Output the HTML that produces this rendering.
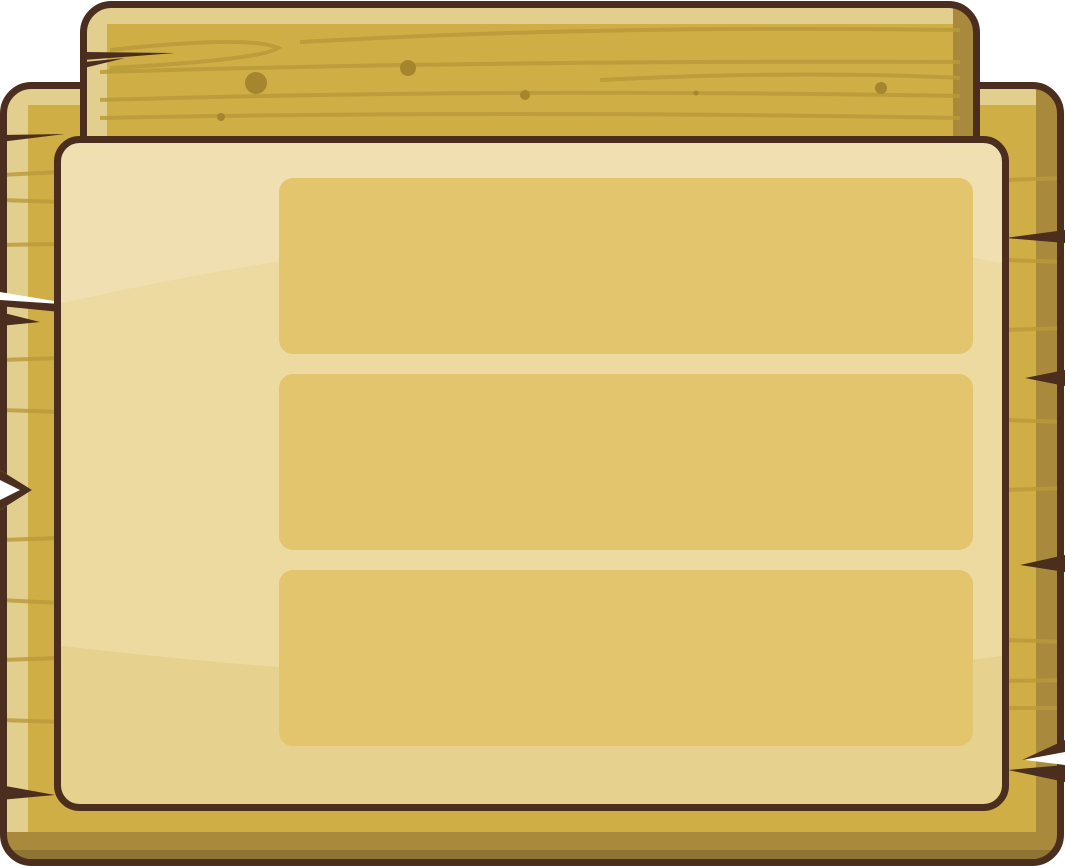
<!DOCTYPE html>
<html><head><style>html,body{margin:0;padding:0;background:#fff;}svg{display:block}</style></head>
<body>
<svg width="1065" height="866" viewBox="0 0 1065 866" xmlns="http://www.w3.org/2000/svg">
<defs>
<clipPath id="cb"><rect x="5" y="87" width="1054" height="774" rx="26"/></clipPath>
<clipPath id="ct"><rect x="85" y="6" width="890" height="150" rx="26"/></clipPath>
<clipPath id="cp"><rect x="60" y="142" width="943" height="663" rx="20"/></clipPath>
</defs>
<rect x="3.5" y="85.5" width="1057" height="777" rx="28" fill="#cfae45"/>
<g clip-path="url(#cb)">
<rect x="0" y="80" width="28" height="790" fill="#e2cf8e"/>
<rect x="0" y="80" width="1065" height="25" fill="#e2cf8e"/>
<rect x="1036" y="80" width="30" height="790" fill="#a98a3c"/>
<rect x="0" y="832" width="1065" height="40" fill="#a98a3c"/>
<rect x="0" y="850" width="1065" height="20" fill="#8f7533"/>
<g stroke="#b99a3a" stroke-width="4" opacity="0.8">
<line x1="0" y1="175" x2="60" y2="172"/><line x1="0" y1="200" x2="60" y2="202"/>
<line x1="0" y1="245" x2="60" y2="244"/><line x1="0" y1="360" x2="60" y2="358"/>
<line x1="0" y1="410" x2="60" y2="412"/><line x1="0" y1="540" x2="60" y2="538"/>
<line x1="0" y1="600" x2="60" y2="603"/><line x1="0" y1="660" x2="60" y2="658"/>
<line x1="0" y1="720" x2="60" y2="722"/>
<line x1="1005" y1="180" x2="1065" y2="178"/><line x1="1005" y1="260" x2="1065" y2="262"/>
<line x1="1005" y1="330" x2="1065" y2="328"/><line x1="1005" y1="420" x2="1065" y2="422"/>
<line x1="1005" y1="490" x2="1065" y2="488"/><line x1="1005" y1="640" x2="1065" y2="642"/>
<line x1="1005" y1="681" x2="1065" y2="680"/><line x1="1005" y1="708" x2="1065" y2="708"/>
</g>
</g>
<rect x="3.5" y="85.5" width="1057" height="777" rx="28" fill="none" stroke="#4b2e1e" stroke-width="7"/>
<polygon points="0,292 60,302 60,308 0,300" fill="#fff"/>
<polygon points="0,300 60,304 60,312 0,306" fill="#4b2e1e"/>
<polygon points="0,312 40,322 0,326" fill="#4b2e1e"/>
<polygon points="0,470 32,490 0,510" fill="#fff"/>
<polygon points="0,470 32,490 0,510 0,500 20,490 0,480" fill="#4b2e1e"/>
<polygon points="0,135 65,134 0,142" fill="#4b2e1e"/>
<polygon points="0,785 55,795 0,800" fill="#4b2e1e"/>
<polygon points="1065,230 1005,238 1065,243" fill="#4b2e1e"/>
<polygon points="1065,370 1025,378 1065,386" fill="#4b2e1e"/>
<polygon points="1065,555 1020,565 1065,572" fill="#4b2e1e"/>
<polygon points="1065,745 1025,760 1065,765" fill="#fff"/>
<polygon points="1065,740 1022,760 1065,752" fill="#4b2e1e"/>
<polygon points="1065,765 1008,770 1065,782" fill="#4b2e1e"/>
<rect x="83.5" y="4.5" width="893" height="170" rx="28" fill="#cfae45"/>
<g clip-path="url(#ct)">
<rect x="80" y="0" width="27" height="180" fill="#e2cf8e"/>
<rect x="80" y="0" width="900" height="24" fill="#e2cf8e"/>
<rect x="953" y="0" width="30" height="180" fill="#a98a3c"/>
<g stroke="#b99a3a" stroke-width="4" fill="none" opacity="0.85">
<path d="M110,50 Q250,35 278,48 Q260,60 110,68"/>
<path d="M100,72 Q500,60 960,62"/>
<path d="M100,100 Q500,88 960,96"/>
<path d="M100,118 Q500,110 960,118"/>
<path d="M300,42 Q600,25 960,30"/>
<path d="M600,80 Q800,70 960,78"/>
</g>
<circle cx="256" cy="83" r="11" fill="#a6852f"/>
<circle cx="408" cy="68" r="8" fill="#a6852f"/>
<circle cx="221" cy="117" r="4" fill="#a6852f"/>
<circle cx="525" cy="95" r="5" fill="#a6852f"/>
<circle cx="696" cy="93" r="2.5" fill="#a6852f"/>
<circle cx="881" cy="88" r="6" fill="#a6852f"/>
</g>
<rect x="83.5" y="4.5" width="893" height="170" rx="28" fill="none" stroke="#4b2e1e" stroke-width="7"/>
<polygon points="84,52 175,53 84,60" fill="#4b2e1e"/>
<polygon points="84,62 125,58 84,68" fill="#4b2e1e"/>
<rect x="57.5" y="139.5" width="948" height="668" rx="22" fill="#e7d18e"/>
<g clip-path="url(#cp)">
<path d="M55,135 H1010 V265 Q600,180 55,305 Z" fill="#f0dfb0"/>
<path d="M55,305 Q600,180 1010,265 V655 Q600,710 55,645 Z" fill="#eddaa1"/>
</g>
<rect x="57.5" y="139.5" width="948" height="668" rx="22" fill="none" stroke="#4b2e1e" stroke-width="7"/>
<rect x="279" y="178" width="694" height="176" rx="14" fill="#e2c56c"/>
<rect x="279" y="374" width="694" height="176" rx="14" fill="#e2c56c"/>
<rect x="279" y="570" width="694" height="176" rx="14" fill="#e2c56c"/>
</svg>
</body></html>
